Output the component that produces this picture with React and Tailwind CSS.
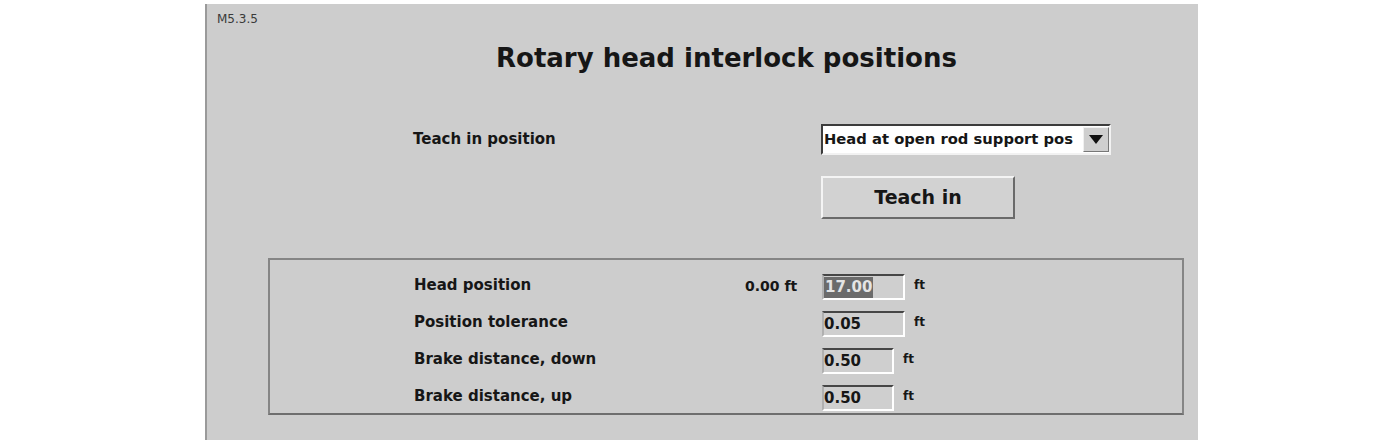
import { useState } from "react";

const rows = [
  { label: "Head position", actual: "0.00 ft", value: "17.00", w: "w-[83px]", selected: true },
  { label: "Position tolerance", value: "0.05", w: "w-[83px]" },
  { label: "Brake distance, down", value: "0.50", w: "w-[72px]" },
  { label: "Brake distance, up", value: "0.50", w: "w-[72px]" },
];

const App = () => {
  const [pos] = useState("Head at open rod support pos");

  return (
    <div className="w-[1400px] h-[445px] bg-white font-['DejaVu_Sans',Verdana,sans-serif] text-[#161616]">
      <div className="ml-[205px] pt-[4px]">
        <div className="w-[993px] h-[436px] bg-[#cdcdcd] border-l-2 border-[#9a9a9a] flex flex-col">
          <div className="pl-[10px] pt-[9px] h-[24px] text-[12px] leading-none text-[#3a3a3a]">M5.3.5</div>

          {/* Title */}
          <h1 className="pl-[289px] mt-[14px] text-[26px] leading-[32px] font-bold">
            Rotary head interlock positions
          </h1>

          {/* Teach in position */}
          <div className="flex mt-[50px] h-[31px]">
            <div className="w-[614px] pl-[206px] pt-[4px] text-[15px] font-bold">Teach in position</div>
            <div className="w-[290px] h-[31px] flex items-center bg-white border-2 border-[#3c3c3c] border-b-[#f2f2f2] border-r-[#f2f2f2]">
              <span className="flex-1 pl-[1px] text-[14.75px] font-bold whitespace-nowrap overflow-hidden">{pos}</span>
              <span className="w-[26px] h-[25px] flex items-center justify-center bg-[#cfcfcf] border border-[#f0f0f0] border-b-[#777] border-r-[#777]">
                <svg width="14" height="9" viewBox="0 0 14 9">
                  <path d="M0 0h14L7 9z" fill="#111" />
                </svg>
              </span>
            </div>
          </div>

          <div className="pl-[614px] mt-[21px]">
            <button className="w-[194px] h-[43px] bg-[#d2d2d2] border-2 border-[#f4f4f4] border-b-[#6a6a6a] border-r-[#6a6a6a] text-[19px] font-bold">
              Teach in
            </button>
          </div>

          {/* Limits box */}
          <div className="ml-[61px] mt-[39px] w-[916px] h-[157px] border-2 border-[#858585] border-b-[#6e6e6e] pt-[14px]">
            <div className="flex flex-col gap-[11px]">
              {rows.map((r) => (
                <div key={r.label} className="flex items-center h-[26px]">
                  <div className="w-[470px] pl-[144px] -mt-[3px] text-[15px] font-bold">{r.label}</div>
                  <div className="w-[82px] pl-[5px] -mt-[2px] text-[14px] font-bold">{r.actual}</div>
                  <div
                    className={`${r.w} h-[26px] flex items-center bg-[#cfcfcf] border-2 border-[#464646] border-l-[#b0b0b0] border-b-white border-r-white`}
                  >
                    <span
                      className={
                        r.selected
                          ? "px-[1px] bg-[#6b6b6b] text-[#e4e4e4] text-[15px] font-bold leading-[21px]"
                          : "text-[15px] font-bold leading-[21px]"
                      }
                    >
                      {r.value}
                    </span>
                  </div>
                  <div className="ml-[9px] text-[12px] font-bold -mt-[4px]">ft</div>
                </div>
              ))}
            </div>
          </div>
        </div>
      </div>
    </div>
  );
};

export default App;
